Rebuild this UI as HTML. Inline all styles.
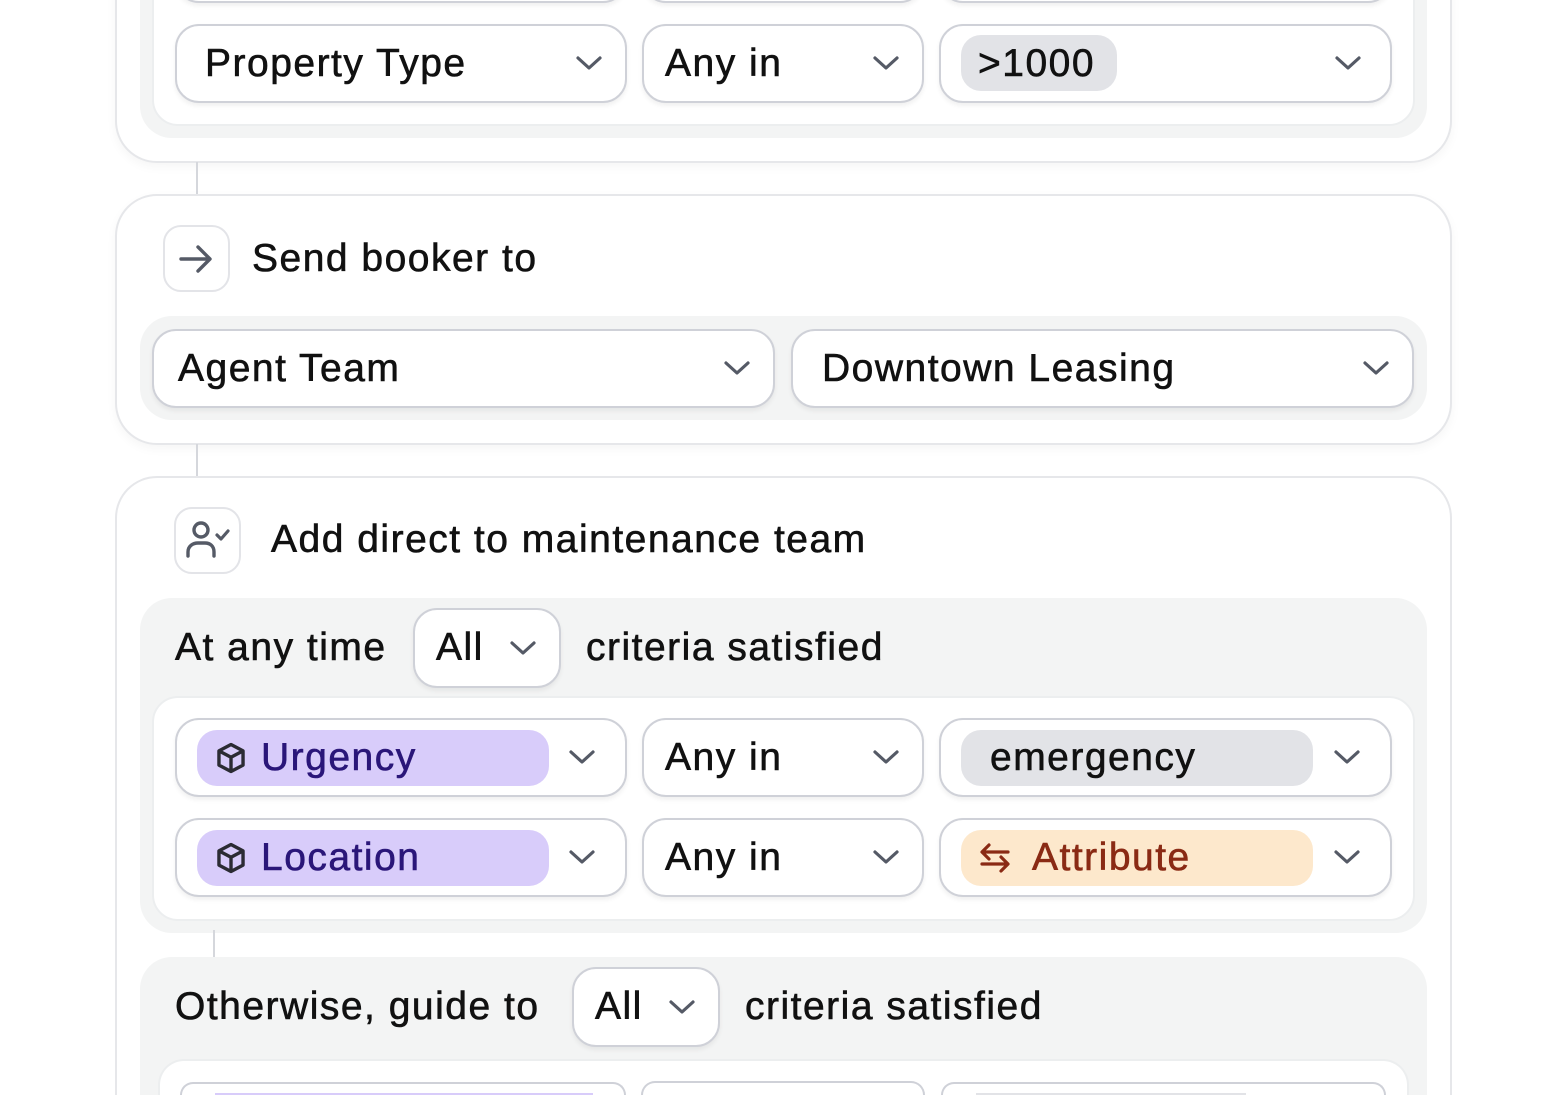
<!DOCTYPE html>
<html style="width:1560px;height:1095px;overflow:hidden"><head><meta charset="utf-8"><style>
*{box-sizing:border-box;margin:0;padding:0}
html,body{width:1560px;height:1095px;overflow:hidden}
body{background:#fff;position:relative;font-family:"Liberation Sans",sans-serif;color:#111;}
.a{position:absolute}
.card{position:absolute;background:#fff;border:2px solid #e6e7ea;border-radius:42px;box-shadow:0 4px 10px rgba(0,0,0,0.04)}
.gp{position:absolute;background:#f3f4f4;border-radius:32px}
.wp{position:absolute;background:#fff;border:2px solid #eceeef;border-radius:26px}
.sel{position:absolute;background:#fff;border:2px solid #cfd1d8;border-radius:24px;box-shadow:0 3px 5px rgba(0,0,0,0.06);height:79px}
.t{position:absolute;font-size:39px;line-height:1;white-space:nowrap;letter-spacing:1.5px;-webkit-text-stroke:0.6px currentColor}
.chev{position:absolute;width:28px;height:16px}
.chip{position:absolute;border-radius:20px;height:56px}
.line{position:absolute;width:2px;background:#d5d7dc}
.ib{position:absolute;border:2px solid #e3e4e8;border-radius:18px;width:67px;height:67px;background:#fff}
.cut{border-bottom:none;border-bottom-left-radius:0;border-bottom-right-radius:0;box-shadow:none}
</style></head><body>
<svg width="0" height="0" style="position:absolute"><defs><symbol id="cv" viewBox="0 0 28 16"><path d="M3 3 L14 13 L25 3" fill="none" stroke="#555a66" stroke-width="3.2" stroke-linecap="round" stroke-linejoin="round"/></symbol>
<symbol id="cube" viewBox="0 0 24 24"><path d="M12 2.5 L20.5 7 V17 L12 21.5 L3.5 17 V7 Z M3.5 7 L12 11.5 L20.5 7 M12 11.5 V21.5" fill="none" stroke="#2b2b33" stroke-width="2.4" stroke-linejoin="round"/></symbol></defs></svg>

<!-- Card 1 -->
<div class="card" style="left:115px;top:-60px;width:1337px;height:223px"></div>
<div class="gp" style="left:140px;top:-40px;width:1287px;height:178px"></div>
<div class="wp" style="left:152px;top:-40px;width:1263px;height:166px"></div>
<div class="sel" style="left:175px;top:-76px;width:452px"></div>
<div class="sel" style="left:642px;top:-76px;width:282px"></div>
<div class="sel" style="left:939px;top:-76px;width:453px"></div>
<div class="sel" style="left:175px;top:24px;width:452px"></div>
<div class="t" style="left:205px;top:44px">Property Type</div>
<svg class="chev" style="left:575px;top:55px"><use href="#cv"/></svg>
<div class="sel" style="left:642px;top:24px;width:282px"></div>
<div class="t" style="left:665px;top:44px">Any in</div>
<svg class="chev" style="left:872px;top:55px"><use href="#cv"/></svg>
<div class="sel" style="left:939px;top:24px;width:453px"></div>
<div class="chip" style="left:961px;top:35px;width:156px;background:#e2e3e7"></div>
<div class="t" style="left:978px;top:44px">&gt;1000</div>
<svg class="chev" style="left:1334px;top:55px"><use href="#cv"/></svg>

<div class="line" style="left:196px;top:162px;height:33px"></div>

<!-- Card 2 -->
<div class="card" style="left:115px;top:194px;width:1337px;height:251px"></div>
<div class="ib" style="left:163px;top:225px"></div>
<svg class="a" style="left:178px;top:241px" width="36" height="36" viewBox="0 0 36 36"><path d="M3 18 H31 M20 6 L32 18 L20 30" fill="none" stroke="#555a66" stroke-width="3.4" stroke-linecap="round" stroke-linejoin="round"/></svg>
<div class="t" style="left:252px;top:239px">Send booker to</div>
<div class="gp" style="left:140px;top:316px;width:1287px;height:104px"></div>
<div class="sel" style="left:152px;top:329px;width:623px"></div>
<div class="t" style="left:178px;top:349px">Agent Team</div>
<svg class="chev" style="left:723px;top:360px"><use href="#cv"/></svg>
<div class="sel" style="left:791px;top:329px;width:623px"></div>
<div class="t" style="left:822px;top:349px">Downtown Leasing</div>
<svg class="chev" style="left:1362px;top:360px"><use href="#cv"/></svg>

<div class="line" style="left:196px;top:444px;height:33px"></div>

<!-- Card 3 -->
<div class="card cut" style="left:115px;top:476px;width:1337px;height:619px"></div>
<div class="ib" style="left:174px;top:507px"></div>
<svg class="a" style="left:184px;top:518px" width="48" height="44" viewBox="0 0 48 44"><circle cx="17" cy="12" r="7" fill="none" stroke="#555a66" stroke-width="3.4"/><path d="M4 38 V34 C4 28 9 25 14 25 H21 C26 25 30 28 30 34 V38" fill="none" stroke="#555a66" stroke-width="3.4" stroke-linecap="round"/><path d="M33 17 L37 21 L44 13" fill="none" stroke="#555a66" stroke-width="3.2" stroke-linecap="round" stroke-linejoin="round"/></svg>
<div class="t" style="left:271px;top:520px">Add direct to maintenance team</div>

<div class="gp" style="left:140px;top:598px;width:1287px;height:335px"></div>
<div class="t" style="left:175px;top:628px">At any time</div>
<div class="sel" style="left:413px;top:608px;width:148px;height:80px"></div>
<div class="t" style="left:436px;top:628px">All</div>
<svg class="chev" style="left:509px;top:640px"><use href="#cv"/></svg>
<div class="t" style="left:586px;top:628px">criteria satisfied</div>

<div class="wp" style="left:152px;top:696px;width:1263px;height:225px"></div>
<div class="sel" style="left:175px;top:718px;width:452px"></div>
<div class="chip" style="left:197px;top:730px;width:352px;background:#d8ccfa"></div>
<svg class="a" style="left:214px;top:741px" width="34" height="34"><use href="#cube"/></svg>
<div class="t" style="left:261px;top:738px;color:#2a1679">Urgency</div>
<svg class="chev" style="left:568px;top:749px"><use href="#cv"/></svg>
<div class="sel" style="left:642px;top:718px;width:282px"></div>
<div class="t" style="left:665px;top:738px">Any in</div>
<svg class="chev" style="left:872px;top:749px"><use href="#cv"/></svg>
<div class="sel" style="left:939px;top:718px;width:453px"></div>
<div class="chip" style="left:961px;top:730px;width:352px;background:#e2e3e7"></div>
<div class="t" style="left:990px;top:738px">emergency</div>
<svg class="chev" style="left:1333px;top:749px"><use href="#cv"/></svg>

<div class="sel" style="left:175px;top:818px;width:452px"></div>
<div class="chip" style="left:197px;top:830px;width:352px;background:#d8ccfa"></div>
<svg class="a" style="left:214px;top:841px" width="34" height="34"><use href="#cube"/></svg>
<div class="t" style="left:261px;top:838px;color:#2a1679">Location</div>
<svg class="chev" style="left:568px;top:849px"><use href="#cv"/></svg>
<div class="sel" style="left:642px;top:818px;width:282px"></div>
<div class="t" style="left:665px;top:838px">Any in</div>
<svg class="chev" style="left:872px;top:849px"><use href="#cv"/></svg>
<div class="sel" style="left:939px;top:818px;width:453px"></div>
<div class="chip" style="left:961px;top:830px;width:352px;background:#fde8cc"></div>
<svg class="a" style="left:978px;top:842px" width="34" height="32" viewBox="0 0 34 32"><path d="M30 10 H5 M11 3 L4 10 L11 17 M4 22 H29 M23 15 L30 22 L23 29" fill="none" stroke="#8a2a14" stroke-width="3.2" stroke-linecap="round" stroke-linejoin="round"/></svg>
<div class="t" style="left:1032px;top:838px;color:#8a2a14">Attribute</div>
<svg class="chev" style="left:1333px;top:849px"><use href="#cv"/></svg>

<div class="line" style="left:213px;top:930px;height:27px"></div>

<div class="gp" style="left:140px;top:957px;width:1287px;height:138px;border-bottom-left-radius:0;border-bottom-right-radius:0"></div>
<div class="t" style="left:175px;top:987px">Otherwise, guide to</div>
<div class="sel" style="left:572px;top:967px;width:148px;height:80px"></div>
<div class="t" style="left:595px;top:987px">All</div>
<svg class="chev" style="left:668px;top:999px"><use href="#cv"/></svg>
<div class="t" style="left:745px;top:987px">criteria satisfied</div>
<div class="wp cut" style="left:158px;top:1059px;width:1251px;height:36px"></div>
<div class="sel cut" style="left:180px;top:1082px;width:446px;height:13px"></div>
<div class="chip" style="left:215px;top:1093px;width:378px;height:2px;border-radius:0;background:#d8ccfa"></div>
<div class="sel cut" style="left:641px;top:1081px;width:284px;height:14px"></div>
<div class="sel cut" style="left:941px;top:1082px;width:445px;height:13px"></div>
<div class="chip" style="left:976px;top:1093px;width:270px;height:2px;border-radius:0;background:#e2e3e7"></div>
</body></html>
